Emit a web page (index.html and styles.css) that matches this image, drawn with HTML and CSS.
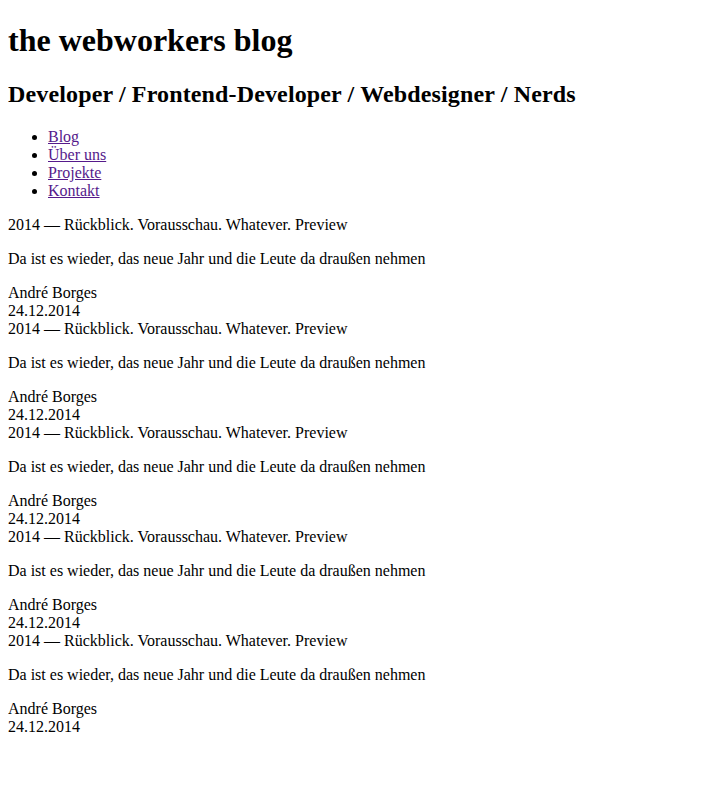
FILE: index.html
```html
<!DOCTYPE html>
<html lang="de">
<head>
<meta charset="utf-8">
<title>the webworkers blog</title>
<link rel="stylesheet" href="styles.css">
</head>
<body class="page">
<header class="site-header">
  <h1 class="site-title">the webworkers blog</h1>
  <h2 class="site-tagline">Developer / Frontend-Developer / Webdesigner / Nerds</h2>
  <nav class="site-nav">
    <ul class="nav-list">
      <li class="nav-item"><a class="nav-link" href="#">Blog</a></li>
      <li class="nav-item"><a class="nav-link" href="#">Über uns</a></li>
      <li class="nav-item"><a class="nav-link" href="#">Projekte</a></li>
      <li class="nav-item"><a class="nav-link" href="#">Kontakt</a></li>
    </ul>
  </nav>
</header>
<main class="posts">
  <article class="post">
    <div class="post-title">2014 — Rückblick. Vorausschau. Whatever. Preview</div>
    <p class="post-excerpt">Da ist es wieder, das neue Jahr und die Leute da draußen nehmen</p>
    <div class="post-author">André Borges</div>
    <div class="post-date">24.12.2014</div>
  </article>
  <article class="post">
    <div class="post-title">2014 — Rückblick. Vorausschau. Whatever. Preview</div>
    <p class="post-excerpt">Da ist es wieder, das neue Jahr und die Leute da draußen nehmen</p>
    <div class="post-author">André Borges</div>
    <div class="post-date">24.12.2014</div>
  </article>
  <article class="post">
    <div class="post-title">2014 — Rückblick. Vorausschau. Whatever. Preview</div>
    <p class="post-excerpt">Da ist es wieder, das neue Jahr und die Leute da draußen nehmen</p>
    <div class="post-author">André Borges</div>
    <div class="post-date">24.12.2014</div>
  </article>
  <article class="post">
    <div class="post-title">2014 — Rückblick. Vorausschau. Whatever. Preview</div>
    <p class="post-excerpt">Da ist es wieder, das neue Jahr und die Leute da draußen nehmen</p>
    <div class="post-author">André Borges</div>
    <div class="post-date">24.12.2014</div>
  </article>
  <article class="post">
    <div class="post-title">2014 — Rückblick. Vorausschau. Whatever. Preview</div>
    <p class="post-excerpt">Da ist es wieder, das neue Jahr und die Leute da draußen nehmen</p>
    <div class="post-author">André Borges</div>
    <div class="post-date">24.12.2014</div>
  </article>
</main>
</body>
</html>
```

FILE: styles.css
```css
html {
  background: #fff;
}

.page {
  margin: 8px;
  font-family: "Liberation Serif", "Times New Roman", serif;
  font-size: 16px;
  line-height: 18px;
  color: #000;
}

.site-title {
  font-size: 32px;
  line-height: 37px;
  font-weight: bold;
  margin: 14px 0 21px;
}

.site-tagline {
  font-size: 24px;
  line-height: 28px;
  font-weight: bold;
  letter-spacing: 0.14px;
  margin: 20px 0;
}

.nav-list {
  margin: 16px 0;
  padding-left: 40px;
  list-style: disc;
}

.nav-link {
  color: #551a8b;
  text-decoration: underline;
}

.post-excerpt {
  margin: 16px 0;
}
```
